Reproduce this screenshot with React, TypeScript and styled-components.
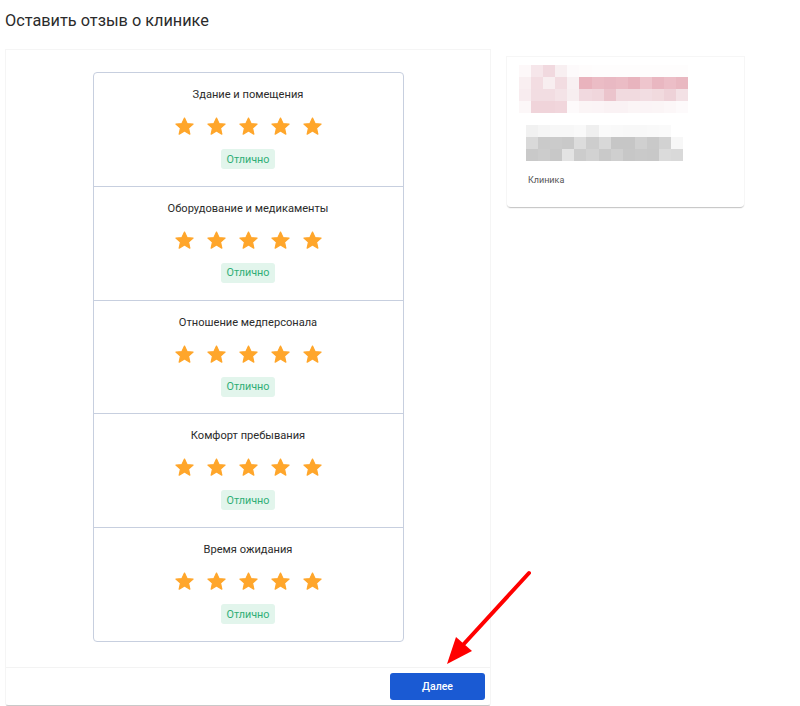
import React from "react";
import styled, { createGlobalStyle } from "styled-components";

const Global = createGlobalStyle`
  html, body { margin: 0; padding: 0; background: #fff; }
  body { font-family: Roboto, "Liberation Sans", Arial, sans-serif; color: #333; }
  * { box-sizing: border-box; }
`;

const Page = styled.div`
  position: relative;
  width: 800px;
  height: 706px;
  padding: 0 5px;
  overflow: hidden;
`;

const Title = styled.h1`
  margin: 0;
  height: 40px;
  display: flex;
  align-items: center;
  font-size: 16.3px;
  font-weight: 400;
  color: #2b2b2b;
`;

const Columns = styled.div`
  display: flex;
  align-items: flex-start;
  gap: 16px;
  margin-top: 9px;
`;

const MainCard = styled.section`
  width: 486px;
  height: 657px;
  border: 1px solid #f5f5f5;
  border-bottom: 1px solid #c9c9c9;
  border-radius: 0 0 3px 3px;
  display: flex;
  flex-direction: column;
`;

const CardBody = styled.div`
  flex: 1;
  display: flex;
  justify-content: center;
  padding-top: 22px;
`;

const RatingBox = styled.div`
  width: 311px;
  height: 570px;
  border: 1px solid #c7cfdf;
  border-radius: 4px;
  display: flex;
  flex-direction: column;
`;

const Section = styled.div<{ $last?: boolean }>`
  height: ${(p) => (p.$last ? "113px" : "114px")};
  border-bottom: ${(p) => (p.$last ? "none" : "1px solid #c7cfdf")};
  display: flex;
  flex-direction: column;
  align-items: center;
  padding-top: 15px;
`;

const SectionTitle = styled.div`
  font-size: 11.1px;
  line-height: 14px;
  color: #2b2b2b;
`;

const Stars = styled.div`
  display: flex;
  gap: 11px;
  margin-top: 14px;
  height: 21px;
`;

const Badge = styled.span`
  margin-top: 12px;
  height: 20px;
  padding: 0 6px;
  display: inline-flex;
  align-items: center;
  background: #e2f5ec;
  color: #2fae76;
  font-size: 10.8px;
  border-radius: 3px;
`;

const Footer = styled.div`
  height: 38px;
  border-top: 1px solid #f3f3f3;
  display: flex;
  justify-content: flex-end;
  align-items: center;
  padding-right: 5px;
`;

const NextButton = styled.button`
  width: 95px;
  height: 27px;
  border: none;
  border-radius: 3px;
  background: #1a5ad3;
  color: #fff;
  font-family: inherit;
  font-size: 10.5px;
  font-weight: 500;
  cursor: pointer;
`;

const SideCard = styled.aside`
  margin-top: 8px;
  width: 237px;
  height: 151px;
  border-bottom: 1px solid #c9c9c9;
  border-radius: 0 0 4px 4px;
  box-shadow: 0 0 0 1px #f6f6f6;
  padding: 8px 11px 0 11px;
  display: flex;
  flex-direction: column;
`;

const Mosaic = styled.div`
  display: flex;
  flex-direction: column;
`;

const MosaicRow = styled.div<{ $indent: number }>`
  display: flex;
  padding-left: ${(p) => p.$indent}px;
`;

const Cell = styled.div`
  width: 12.1px;
  height: 12px;
`;

const Spacer = styled.div<{ $h: number }>`
  height: ${(p) => p.$h}px;
`;

const Caption = styled.div`
  margin-top: 14px;
  padding-left: 10px;
  font-size: 9px;
  color: #555;
`;

const ArrowLayer = styled.svg`
  position: absolute;
  left: 0;
  top: 0;
  pointer-events: none;
`;

const Star = () => (
  <svg width="21" height="21" viewBox="0 0 24 24">
    <path
      d="M12 2.3l2.9 6.3 6.9.7-5.2 4.6 1.5 6.8L12 17.2l-6.1 3.5 1.5-6.8L2.2 9.3l6.9-.7z"
      fill="#ffa62b"
      stroke="#ffa62b"
      strokeWidth="1.4"
      strokeLinejoin="round"
    />
  </svg>
);

const categories = [
  "Здание и помещения",
  "Оборудование и медикаменты",
  "Отношение медперсонала",
  "Комфорт пребывания",
  "Время ожидания",
];

const pinkRows: { indent: number; colors: string[] }[] = [
  { indent: 1, colors: ["#fdf8f9", "#f6e6ea", "#f1d9df", "#f8eff1", "#fdfafb", "#fefcfc", "#fefdfd", "#fefdfd", "#fefdfd", "#fefdfd", "#fefdfd", "#fefdfd", "#fefdfd", "#fefdfd"] },
  { indent: 1, colors: ["#f9eff1", "#f3dde2", "#f8eef0", "#f2dce1", "#f8f0f2", "#e9b3bd", "#ebbcc5", "#e9b9c3", "#ebbcc5", "#e8b4be", "#eec5cd", "#e9b7c1", "#ecbec7", "#e9b8c1"] },
  { indent: 1, colors: ["#f8ecef", "#f2dde2", "#f2dde2", "#f4e3e7", "#f7eef0", "#f1d9df", "#f0d6dc", "#ebc4cc", "#f1dadf", "#f1dadf", "#f2dde2", "#f1dade", "#eed2d8", "#f3e1e5"] },
  { indent: 1, colors: ["#fcf7f8", "#f0d4da", "#f0d4da", "#f1d6dc", "#fdfafb", "#fbf5f6", "#fbf4f6", "#faf2f4", "#faf2f4", "#fbf5f6", "#fbf4f6", "#fbf5f6", "#fcf7f8", "#fdfafb"] },
];

const greyRows: { indent: number; colors: string[] }[] = [
  { indent: 8, colors: ["#f1f1f1", "#f5f5f5", "#f7f7f7", "#f7f7f7", "#f9f9f9", "#efefef", "#fafafa", "#f9f9f9", "#f8f8f8", "#f8f8f8", "#f9f9f9", "#fafafa", "#ffffff"] },
  { indent: 8, colors: ["#d9d9d9", "#cacaca", "#cbcbcb", "#c9c9c9", "#dcdcdc", "#cdcdcd", "#d8d8d8", "#c6c6c6", "#c6c6c6", "#d0d0d0", "#c9c9c9", "#d2d2d2", "#f7f7f7"] },
  { indent: 8, colors: ["#c9c9c9", "#cccccc", "#c8c8c8", "#e3e3e3", "#cccccc", "#d2d2d2", "#c9c9c9", "#cfcfcf", "#c7c7c7", "#c9c9c9", "#c8c8c8", "#dbdbdb", "#d9d9d9", "#ffffff"] },
];

export default function App() {
  return (
    <Page>
      <Global />
      <Title>Оставить отзыв о клинике</Title>
      <Columns>
        <MainCard>
          <CardBody>
            <RatingBox>
              {categories.map((c, i) => (
                <Section key={c} $last={i === categories.length - 1}>
                  <SectionTitle>{c}</SectionTitle>
                  <Stars>
                    {[0, 1, 2, 3, 4].map((s) => (
                      <Star key={s} />
                    ))}
                  </Stars>
                  <Badge>Отлично</Badge>
                </Section>
              ))}
            </RatingBox>
          </CardBody>
          <Footer>
            <NextButton>Далее</NextButton>
          </Footer>
        </MainCard>
        <SideCard>
          <Mosaic>
            {pinkRows.map((r, i) => (
              <MosaicRow key={i} $indent={r.indent}>
                {r.colors.map((col, j) => (
                  <Cell key={j} style={{ background: col }} />
                ))}
              </MosaicRow>
            ))}
            <Spacer $h={12} />
            {greyRows.map((r, i) => (
              <MosaicRow key={i} $indent={r.indent}>
                {r.colors.map((col, j) => (
                  <Cell key={j} style={{ background: col }} />
                ))}
              </MosaicRow>
            ))}
          </Mosaic>
          <Caption>Клиника</Caption>
        </SideCard>
      </Columns>
      <ArrowLayer width="800" height="706" viewBox="0 0 800 706">
        <line x1="529" y1="573" x2="462" y2="646" stroke="#ff0000" strokeWidth="4" strokeLinecap="round" />
        <polygon points="447,664 456,637 472,651" fill="#ff0000" />
      </ArrowLayer>
    </Page>
  );
}
